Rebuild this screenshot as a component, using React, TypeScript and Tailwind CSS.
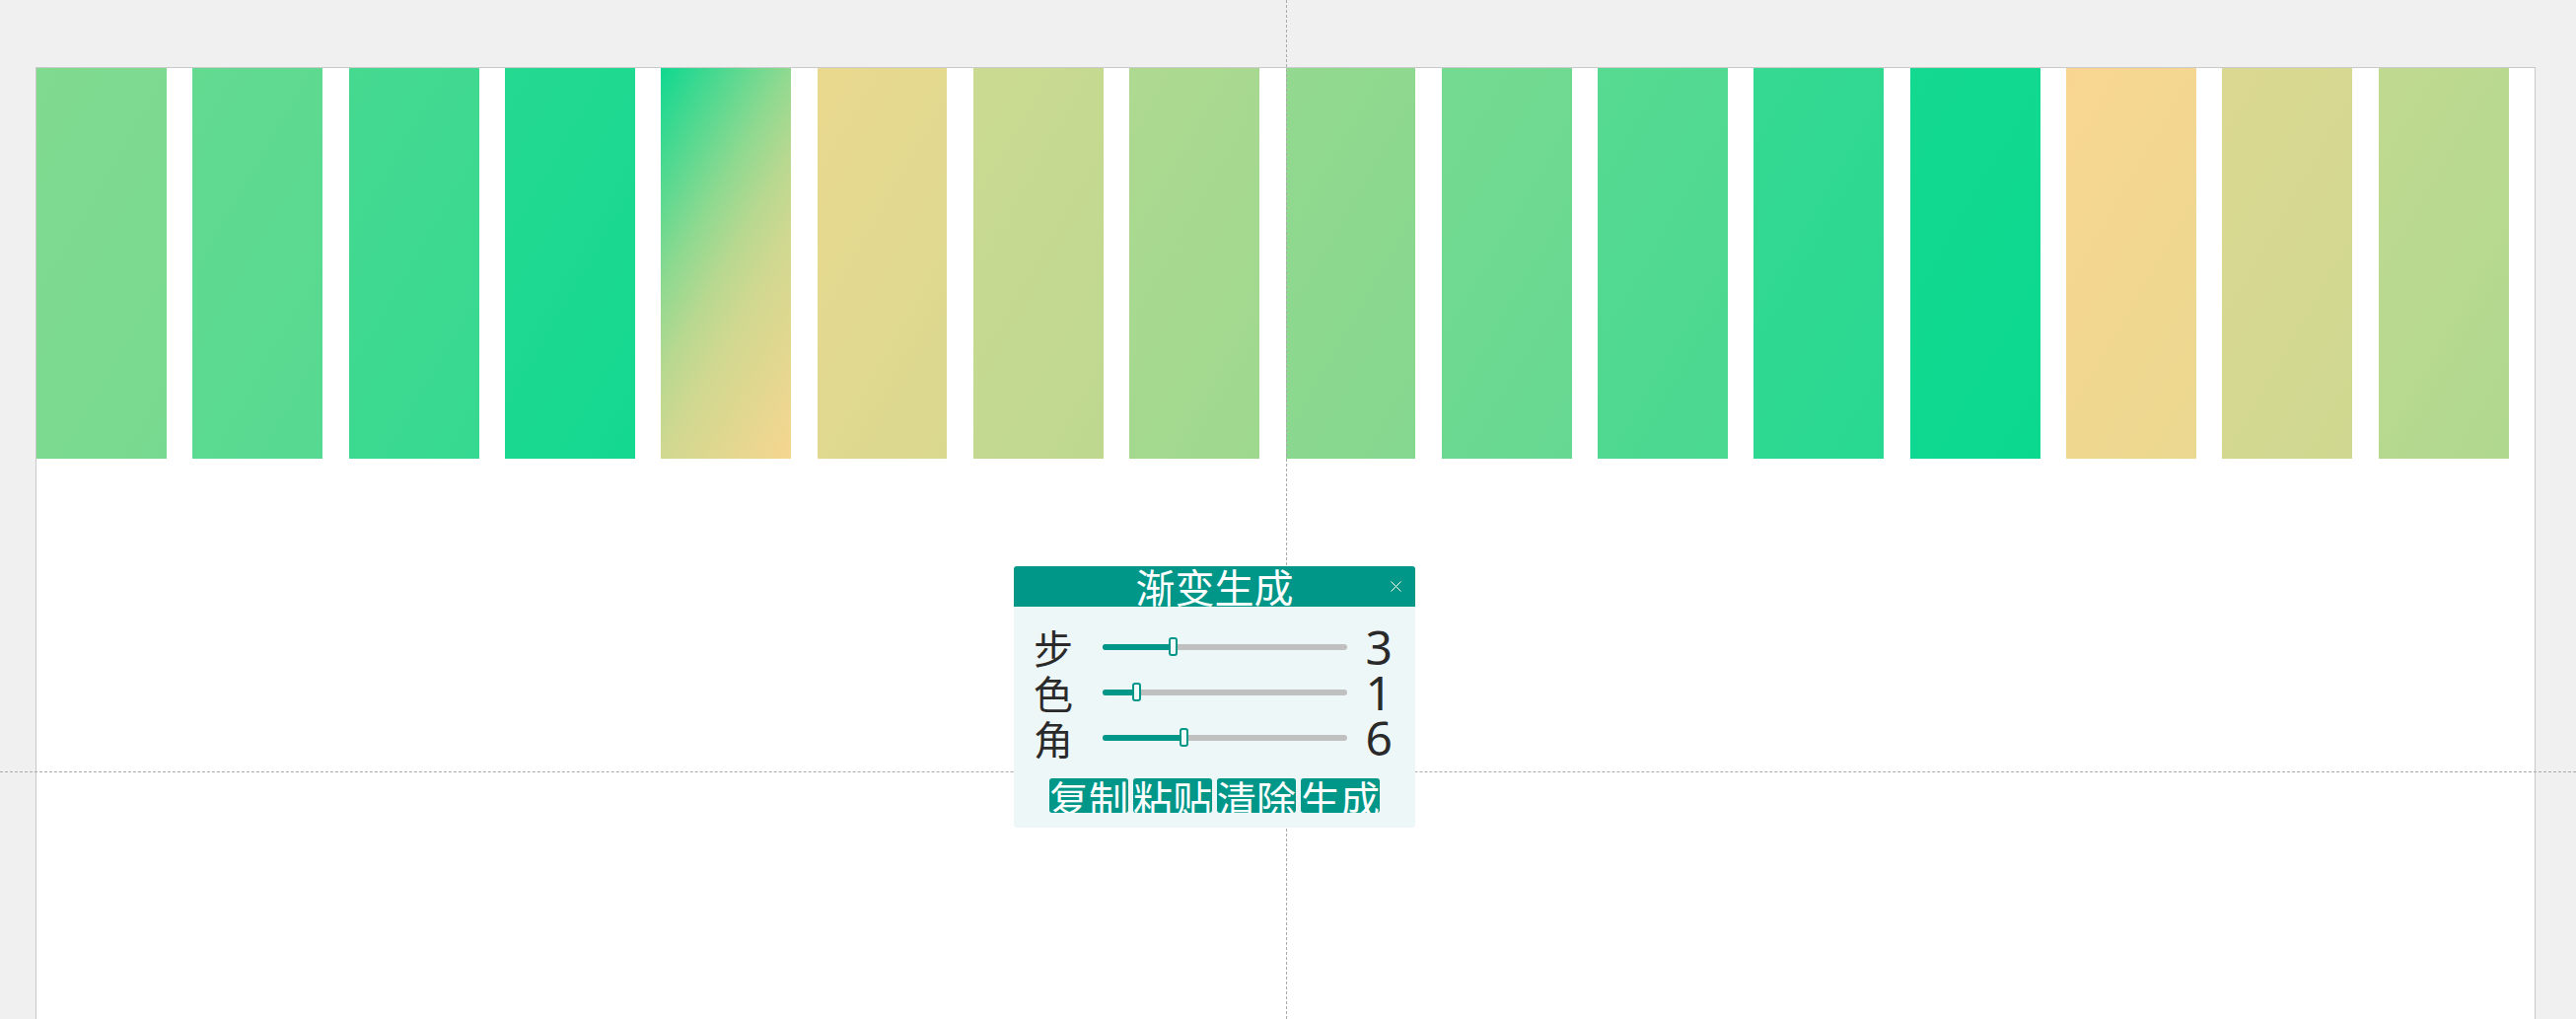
import {useState} from 'react'

const swatches: string[] = [
    '#80da90, #77d98f',
    '#63da90, #56d991',
    '#46d990, #36d991',
    '#25d991, #14d890',
    '#0fd890 0%, #8fd990 36%, #b8d890 50%, #d0d890 63%, #f6d690 100%',
    '#e9d98f, #dad88f',
    '#cbda91, #bed890',
    '#aed990, #9ed88f',
    '#93d98f, #85d78f',
    '#75da91, #66d891',
    '#57da91, #4ad891',
    '#36d991, #28d891',
    '#14d990, #0bd88f',
    '#f8d691, #ebd890',
    '#dbd891, #cfd890',
    '#c0d990, #b0d88f',
]

const sliders = [
    {label: '步', value: 3, pos: 71.5},
    {label: '色', value: 1, pos: 34.5},
    {label: '角', value: 6, pos: 82.5},
]

const cjk = {fontFamily: '"Noto Sans CJK SC", "Noto Sans", sans-serif'}

function Slider({pos}: {pos: number}) {
    return (
        <div className="relative w-[248px] h-[6px] rounded-full bg-[#c0c0c0]">
            <div className="absolute left-0 top-0 h-[6px] rounded-full bg-[#009688]" style={{width: pos}} />
            <div
                className="absolute top-[-7px] w-[9px] h-[19px] rounded-[3px] border-2 border-[#009688] bg-[#f2fbfb]"
                style={{left: pos - 4.5}}
            />
        </div>
    )
}

function GradientDialog() {
    const [open] = useState(true)
    if (!open) return null

    return (
        <div className="absolute left-[1028px] top-[574px] w-[407px] h-[265px] flex flex-col" style={cjk}>
            <div className="relative h-[41px] shrink-0 overflow-hidden rounded-t-[3px] bg-[#009688] text-center text-white text-[40px] leading-[40px]">
                渐变生成
                <svg className="absolute right-[14px] top-[15px]" width="11" height="11" viewBox="0 0 11 11">
                    <path d="M0.5 0.5 L10.5 10.5 M10.5 0.5 L0.5 10.5" stroke="#ffffff" strokeWidth="1" fill="none" />
                </svg>
            </div>
            <div className="flex-1 flex flex-col rounded-b-[3px] bg-[#eef7f8] pt-[18px] pl-[20px]">
                {sliders.map((s) => (
                    <div key={s.label} className="flex items-center h-[46px]">
                        <div className="w-[40px] text-[40px] leading-[46px] text-[#2a2a2a]">{s.label}</div>
                        <div className="ml-[30px]">
                            <Slider pos={s.pos} />
                        </div>
                        <div
                            className="w-[46px] text-right text-[48px] leading-[40px] text-[#2a2a2a]"
                            style={{fontFamily: '"Noto Sans", sans-serif'}}
                        >
                            {s.value}
                        </div>
                    </div>
                ))}
                <div className="flex justify-center gap-[5px] mt-[18px] pr-[20px]">
                    {['复制', '粘贴', '清除', '生成'].map((b) => (
                        <div
                            key={b}
                            className="w-[80px] h-[35px] overflow-hidden rounded-[3px] bg-[#009688] text-white text-[40px] leading-[40px] whitespace-nowrap"
                        >
                            {b}
                        </div>
                    ))}
                </div>
            </div>
        </div>
    )
}

export default function App() {
    return (
        <div className="relative w-full h-[1033px] overflow-hidden bg-[#f0f0f0] pt-[68px] pl-[36px] pr-[41px]">
            <div className="h-[1000px] border border-b-0 border-[#c8c8c8] bg-white">
                <div className="flex h-[396px]">
                    {swatches.map((stops, i) => (
                        <div key={i} className="flex-1">
                            <div
                                className="w-5/6 h-full"
                                style={{background: `linear-gradient(120deg, ${stops})`}}
                            />
                        </div>
                    ))}
                </div>
            </div>

            {/* guide lines */}
            <div className="absolute left-0 right-0 top-[782px] border-t border-dashed border-[#aaaaaa]" />
            <div className="absolute top-0 bottom-0 left-[1304px] border-l border-dashed border-[#aaaaaa]" />

            <GradientDialog />
        </div>
    )
}
